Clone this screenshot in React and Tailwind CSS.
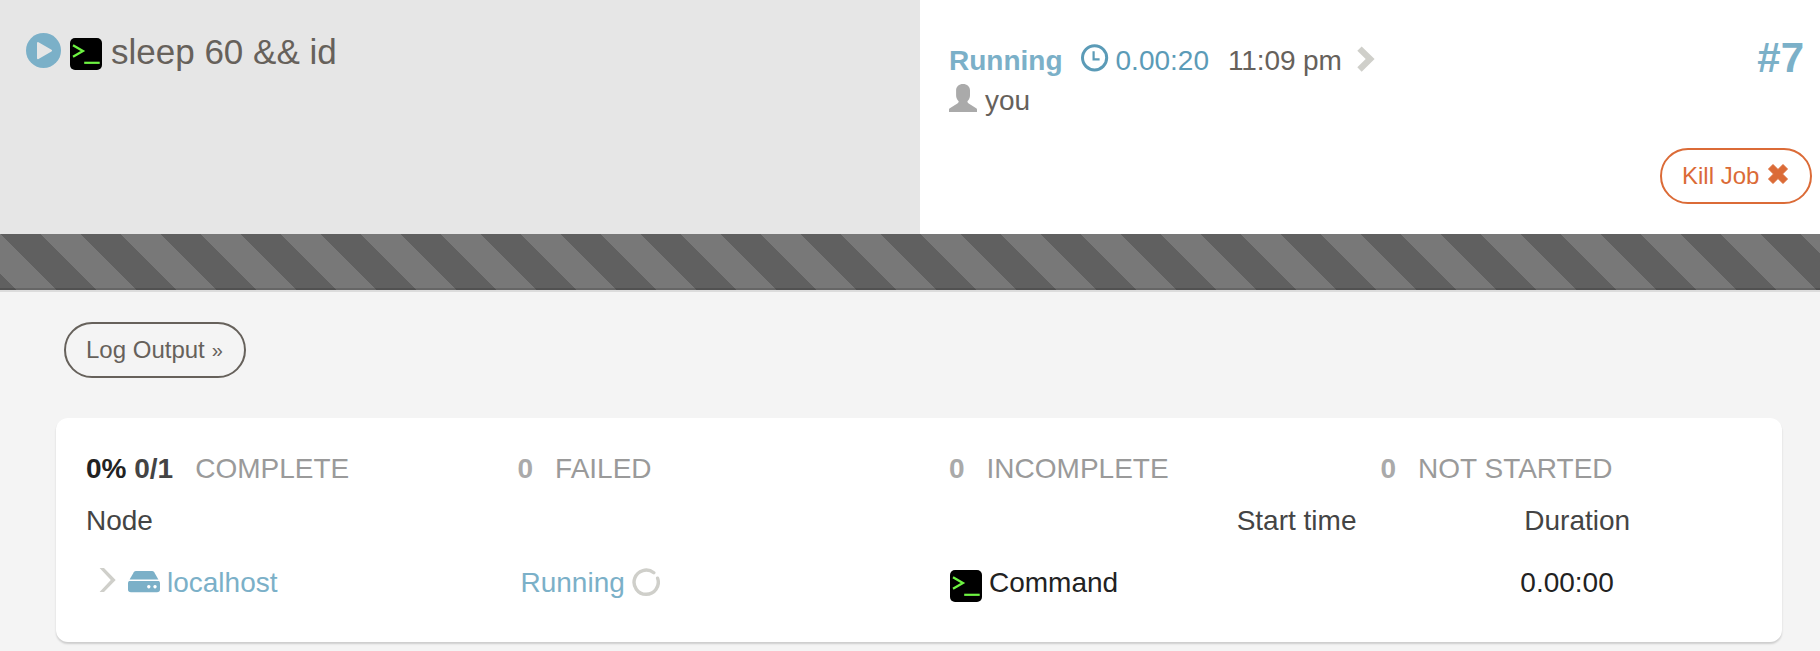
function ConsoleIcon({ className }) {
  return (
    <svg viewBox="0 0 32 32" className={`block h-8 w-8 shrink-0 ${className}`}>
      <rect width="32" height="32" rx="5" fill="#000" />
      <path d="M3 7.300 12.900 13 3 18.700" fill="none" stroke="#6ef442" strokeWidth="2.300" />
      <path d="M14.200 24.800H29.700" stroke="#6ef442" strokeWidth="2.200" />
    </svg>
  );
}

function PlayIcon() {
  return (
    <svg viewBox="0 0 35 35" className="mt-[33px] block size-[35px] shrink-0">
      <circle cx="17.5" cy="17.5" r="17.5" fill="#7bb0c8" />
      <path d="M12 10v15.200L25 17.600Z" fill="#e6e6e6" stroke="#e6e6e6" strokeWidth="2" strokeLinejoin="round" />
    </svg>
  );
}

function ClockIcon() {
  return (
    <svg viewBox="0 0 28 28" className="mt-4 block size-7 shrink-0">
      <circle cx="13.600" cy="13.800" r="12.100" fill="none" stroke="#5b9bb7" strokeWidth="3" />
      <path d="M12.600 7.200V15.400H18.600" fill="none" stroke="#5b9bb7" strokeWidth="2.200" />
    </svg>
  );
}

function UserIcon() {
  return (
    <svg viewBox="0 0 28 28" className="mt-1 block size-7 shrink-0">
      <path
        d="M0 28V25.500C0 24.900.3 24.500.8 24.200L8.400 19.400C9.300 18.800 9.700 18.200 9.700 17.300 8 15.800 7.100 13.600 7.100 11.300V6.500C7.100 2.600 10 0 14 0S21 2.600 21 6.500V11.300C21 13.600 20.100 15.800 18.400 17.300 18.400 18.200 18.800 18.800 19.700 19.400L27.200 24.200C27.700 24.500 28 24.900 28 25.500V28Z"
        fill="#aaa"
      />
    </svg>
  );
}

function Stat({ children, label }) {
  return (
    <div className="flex gap-[22px] px-[30px]">
      <span className="font-bold text-[#aaa]">{children}</span>
      <span className="text-[#9a9a9a]">{label}</span>
    </div>
  );
}

export default function App() {
  return (
    <div className="h-[651px] w-full overflow-hidden bg-[#f4f4f4] font-['Liberation_Sans',Arial,sans-serif] text-[28px] leading-10 whitespace-nowrap text-[#66615b]">
      <header className="flex h-[234px]">
        <div className="flex w-[920px] items-start bg-[#e6e6e6] pl-[26px]">
          <PlayIcon />
          <ConsoleIcon className="mt-[38px] ml-[9px]" />
          <h1 className="mt-8 ml-[9px] text-[35px]">sleep 60 &amp;&amp; id</h1>
        </div>
        <div className="flex flex-1 items-start justify-between bg-white pr-2 pl-7">
          <div className="pt-7 pl-px">
            <div className="flex h-[52px] items-start">
              <strong className="mt-[13px] text-[#7bb0c8]">Running</strong>
              <div className="ml-[18px] flex items-start text-[#5b9bb7]">
                <ClockIcon />
                <span className="mt-[13px] ml-[7px]">0.00:20</span>
              </div>
              <span className="mt-[13px] ml-[19px] tracking-[-0.1px]">11:09 pm</span>
              <svg viewBox="0 0 18 26" className="mt-[18px] ml-[15px] block h-[26px] w-[18px]">
                <path d="M4.700.4 17.600 13 4.700 25.700.3 21.300 8.700 13 .3 4.800Z" fill="#cfcfca" />
              </svg>
            </div>
            <div className="flex items-start gap-2">
              <UserIcon />
              <span className="mt-px">you</span>
            </div>
          </div>
          <div className="flex flex-col items-end">
            <strong className="mt-[38px] mr-2 text-[42px] text-[#7bb0c8]">#7</strong>
            <button className="mt-[70px] flex h-14 w-[152px] items-center rounded-full border-2 border-[#db6b37] pl-5 text-2xl text-[#db6b37]">
              Kill Job
              <svg viewBox="0 0 20 20" className="-mt-1 ml-[9px] block size-5">
                <path d="M5 .5 10 5.500 15 .5 19.500 5 14.500 10 19.500 15 15 19.500 10 14.500 5 19.500.5 15 5.500 10 .5 5Z" fill="#db6b37" stroke="#db6b37" strokeLinejoin="round" />
              </svg>
            </button>
          </div>
        </div>
      </header>

      <div className="h-14 border-b-2 border-black/15 bg-[#606060] bg-[linear-gradient(45deg,transparent_25%,#787878_25%,#787878_50%,transparent_50%,transparent_75%,#787878_75%)] bg-[size:80px_80px] bg-[position:1px_0px] bg-origin-border" />
      <div className="h-0.5 bg-[#dcdcdc]" />

      <main className="pt-[30px] pr-[38px] pl-14">
        <button className="ml-2 flex h-14 w-[182px] items-center rounded-full border-2 border-[#66615b] pl-5 text-2xl">
          Log Output
          <span className="ml-[7px] text-[20px]">»</span>
        </button>

        <section className="mt-10 h-56 rounded-xl bg-white pt-[31px] shadow-[0_2px_2px_rgba(0,0,0,0.16)]">
          <div className="grid grid-cols-4">
            <Stat label="COMPLETE">
              <span className="text-[#222]">0%</span> <span className="text-[#444]">0/1</span>
            </Stat>
            <Stat label="FAILED">0</Stat>
            <Stat label="INCOMPLETE">0</Stat>
            <Stat label="NOT STARTED">0</Stat>
          </div>
          <div className="mt-3 grid grid-cols-12 text-[#444]">
            <div className="col-span-8 pl-[30px]">Node</div>
            <div className="col-span-2 pl-[30px]">Start time</div>
            <div className="col-span-2 pl-[30px]">Duration</div>
          </div>
          <div className="mt-[22px] grid grid-cols-12 text-[#222]">
            <div className="col-span-3 flex items-start pl-[43px] text-[#7bb0c8]">
              <svg viewBox="0 0 17 24" className="mt-[5px] block h-6 w-[17px]">
                <path d="M.6 0H5L16.700 12 5 24H.6L11.800 12Z" fill="#cfcfca" />
              </svg>
              <svg viewBox="0 0 32 22" className="mt-2 ml-3 block h-[22px] w-8">
                <path d="M8 0H24C25 0 25.700.4 26.200 1.200L30.400 8.500H1.600L5.800 1.200C6.300.4 7 0 8 0Z" fill="#7bb0c8" />
                <path
                  fillRule="evenodd"
                  d="M1.200 10H30.800Q32 10.600 32 12V18.500Q32 21.200 29 21.200H3Q0 21.200 0 18.500V12Q0 10.600 1.200 10ZM20.800 14a1.700 1.700 0 1 0 .01 0ZM27 14a1.700 1.700 0 1 0 .01 0Z"
                  fill="#7bb0c8"
                />
              </svg>
              <span className="ml-[7px]">localhost</span>
            </div>
            <div className="col-span-3 flex items-start pl-[33px] text-[#7bb0c8]">
              Running
              <svg viewBox="0 0 28 28" className="mt-[5px] ml-[7px] block size-7">
                <path d="M25.600 10.200A12.100 12.100 0 1 1 21.800 4.800" fill="none" stroke="#cfcfca" strokeWidth="3.400" strokeLinecap="round" />
              </svg>
            </div>
            <div className="col-span-4 flex items-start pl-[31px]">
              <ConsoleIcon className="mt-[7px]" />
              <span className="ml-[7px]">Command</span>
            </div>
            <div className="col-span-2 pl-[26px]">0.00:00</div>
          </div>
        </section>
      </main>
    </div>
  );
}
